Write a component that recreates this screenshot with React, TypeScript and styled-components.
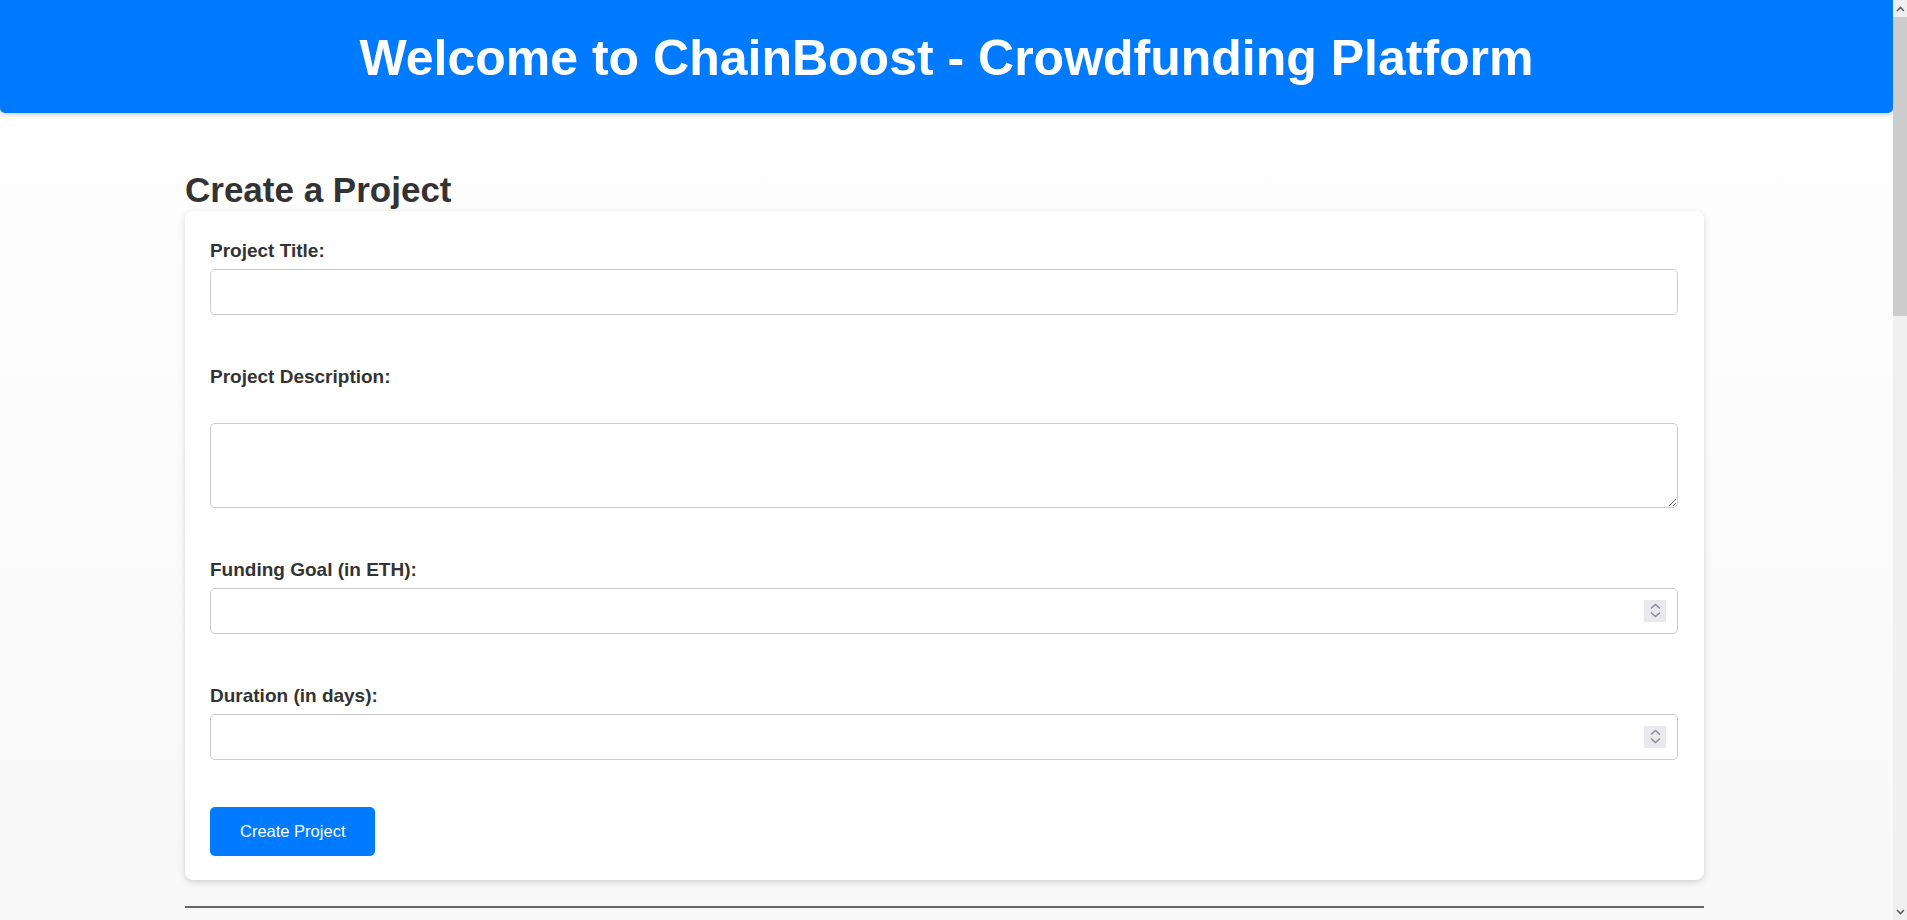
import React from "react";
import styled, { createGlobalStyle } from "styled-components";

const GlobalStyle = createGlobalStyle`
    body {
        margin: 0;
        font-family: "Liberation Sans", Arial, sans-serif;
        color: #333;
        background: linear-gradient(to bottom, #ffffff 0px, #f8f8f8 900px) no-repeat, #f8f8f8;
    }
`

const Page = styled.div`
    min-height: 2726px;
    padding-right: 14px;
`

// window scrollbar, drawn over the right edge like the browser does
const ScrollTrack = styled.div`
    position: fixed;
    top: 0;
    right: 0;
    width: 14px;
    height: 100vh;
    background: #f0f0f0;
    display: flex;
    flex-direction: column;
`

const ScrollArrow = styled.div`
    height: 17px;
    display: flex;
    align-items: center;
    justify-content: center;
`

const ScrollThumb = styled.div`
    height: 299px;
    background: #cdcdcd;
`

const Header = styled.header`
    background: #007bff;
    color: #fff;
    text-align: center;
    padding: 30px 0 26px;
    border-radius: 0 0 5px 5px;
    box-shadow: 0 2px 5px rgba(0, 0, 0, 0.18);
`

const HeaderTitle = styled.h1`
    margin: 0;
    font-size: 50px;
    line-height: 57px;
    font-weight: 700;
`

const Main = styled.main`
    width: 1519px;
    margin: 0 auto;
    padding: 57px 4px 0 0;
`

const SectionTitle = styled.h2`
    margin: 0 0 1px;
    font-size: 35px;
    line-height: 40px;
    font-weight: 700;
    color: #333;
`

const Card = styled.form`
    display: flex;
    flex-direction: column;
    background: #fff;
    border-radius: 8px;
    padding: 23px 26px 24px 25px;
    box-shadow: 0 2px 6px rgba(0, 0, 0, 0.16);
`

const Field = styled.div`
    display: flex;
    flex-direction: column;
    margin-bottom: 45px;
`

const Label = styled.label`
    font-size: 19px;
    font-weight: 700;
    line-height: 24px;
    margin: 5px 0 6px;
    color: #333;
`

const Input = styled.input`
    display: block;
    width: 100%;
    height: 46px;
    box-sizing: border-box;
    border: 1px solid #ccc;
    border-radius: 5px;
    padding: 8px 12px;
    font-size: 16px;
    font-family: inherit;
    background: #fff;
    -moz-appearance: textfield;
    &::-webkit-inner-spin-button,
    &::-webkit-outer-spin-button {
        -webkit-appearance: none;
        margin: 0;
    }
`

const TextArea = styled.textarea`
    display: block;
    width: 100%;
    height: 85px;
    box-sizing: border-box;
    margin-top: 28px;
    border: 1px solid #ccc;
    border-radius: 5px;
    padding: 8px 12px;
    font-size: 16px;
    font-family: inherit;
    background: #fff;
`

const NumberWrap = styled.div`
    position: relative;
`

const Spinner = styled.span`
    position: absolute;
    right: 12px;
    top: 50%;
    transform: translateY(-50%);
    width: 22px;
    height: 22px;
    background: #e9e9ed;
    display: flex;
`

const SubmitButton = styled.button`
    align-self: flex-start;
    margin-top: 2px;
    height: 49px;
    padding: 0 30px;
    border: none;
    border-radius: 5px;
    background: #007bff;
    color: #fff;
    font-family: inherit;
    font-size: 16.5px;
    cursor: pointer;
`

const Divider = styled.hr`
    border: none;
    border-top: 2px solid #666;
    margin: 26px 0 0;
`

function SpinIcon() {
    return (
        <Spinner>
            <svg width="22" height="22" viewBox="0 0 22 22" fill="none" stroke="#8b8b99" strokeWidth="1.5">
                <path d="M7 8.5 L11.5 4.5 L16 8.5"/>
                <path d="M7 12.5 L11.5 16.5 L16 12.5"/>
            </svg>
        </Spinner>
    )
}

function WindowScrollbar() {
    return (
        <ScrollTrack aria-hidden>
            <ScrollArrow>
                <svg width="9" height="6" viewBox="0 0 9 6" fill="none" stroke="#606060" strokeWidth="1.6">
                    <path d="M1 5 L4.5 1.5 L8 5"/>
                </svg>
            </ScrollArrow>
            <ScrollThumb/>
            <div style={{flex: 1}}/>
            <ScrollArrow>
                <svg width="9" height="6" viewBox="0 0 9 6" fill="none" stroke="#606060" strokeWidth="1.6">
                    <path d="M1 1 L4.5 4.5 L8 1"/>
                </svg>
            </ScrollArrow>
        </ScrollTrack>
    )
}

export default function App() {
    return (
        <Page>
            <GlobalStyle/>
            <Header>
                <HeaderTitle>Welcome to ChainBoost - Crowdfunding Platform</HeaderTitle>
            </Header>
            <Main>
                <SectionTitle>Create a Project</SectionTitle>
                <Card onSubmit={e => e.preventDefault()}>
                    <Field>
                        <Label htmlFor="title">Project Title:</Label>
                        <Input id="title" type="text"/>
                    </Field>
                    <Field>
                        <Label htmlFor="description">Project Description:</Label>
                        <TextArea id="description"/>
                    </Field>
                    <Field>
                        <Label htmlFor="goal">Funding Goal (in ETH):</Label>
                        <NumberWrap>
                            <Input id="goal" type="number"/>
                            <SpinIcon/>
                        </NumberWrap>
                    </Field>
                    <Field>
                        <Label htmlFor="duration">Duration (in days):</Label>
                        <NumberWrap>
                            <Input id="duration" type="number"/>
                            <SpinIcon/>
                        </NumberWrap>
                    </Field>
                    <SubmitButton type="submit">Create Project</SubmitButton>
                </Card>
                <Divider/>
            </Main>
            <WindowScrollbar/>
        </Page>
    )
}
